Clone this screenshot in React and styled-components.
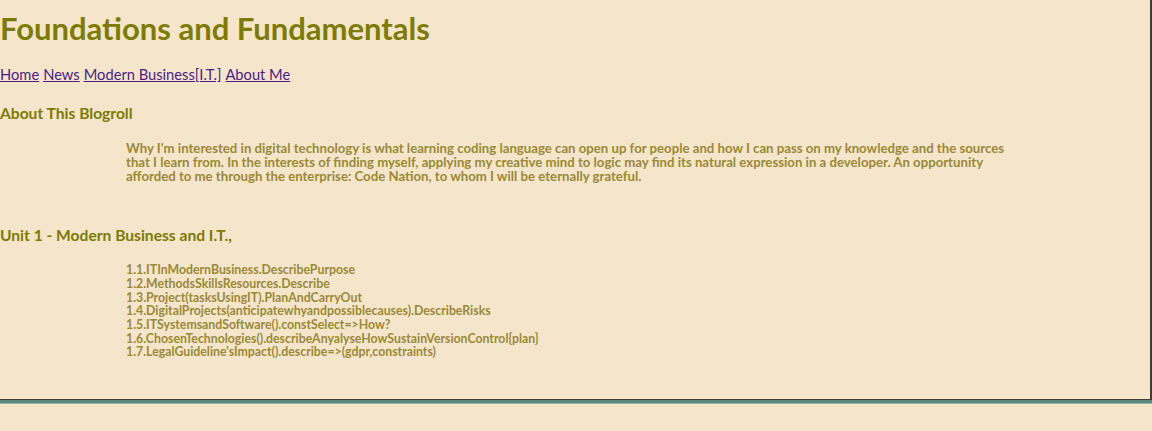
import React from "react";
import styled, { createGlobalStyle } from "styled-components";

const GlobalStyle = createGlobalStyle`
  html, body {
    margin: 0;
    padding: 0;
    background: #f5e5cb;
  }
  body {
    font-family: Lato, "Liberation Sans", sans-serif;
  }
`;

const Page = styled.div`
  display: flex;
  flex-direction: column;
  width: 1152px;
`;

const Main = styled.main`
  display: flex;
  flex-direction: column;
  box-sizing: border-box;
  width: 1152px;
  height: 400px;
  padding-top: 8px;
  border-right: 2px solid #3c3c3c;
  border-bottom: 1px solid #3c3c3c;
`;

const Shade = styled.div`
  height: 3px;
  background: #5e8a7e;
  border-bottom: 1px solid #93b3a6;
`;

const Title = styled.h1`
  margin: 0;
  font-size: 31px;
  line-height: 40px;
  font-weight: 700;
  color: #7d7b00;
`;

const Nav = styled.nav`
  display: flex;
  gap: 4px;
  margin-top: 16px;
  font-size: 14.7px;
  line-height: 20px;
`;

const NavLink = styled.a`
  color: #4b1d86;
  text-decoration: underline;
`;

const Heading = styled.h4`
  margin: ${(p) => p.$top}px 0 0;
  font-size: 15.6px;
  line-height: 20px;
  font-weight: 700;
  color: #7d7b00;
`;

const Text = styled.p`
  margin: ${(p) => p.$top}px 0 0 126px;
  width: 885px;
  font-size: ${(p) => p.$size}px;
  line-height: ${(p) => p.$lh}px;
  font-weight: 700;
  color: #9a8a36;
`;

const items = [
  "1.1.ITInModernBusiness.DescribePurpose",
  "1.2.MethodsSkillsResources.Describe",
  "1.3.Project(tasksUsingIT).PlanAndCarryOut",
  "1.4.DigitalProjects(anticipatewhyandpossiblecauses).DescribeRisks",
  "1.5.ITSystemsandSoftware().constSelect=>How?",
  "1.6.ChosenTechnologies().describeAnyalyseHowSustainVersionControl{plan}",
  "1.7.LegalGuideline'sImpact().describe=>(gdpr,constraints)",
];

export default function App() {
  return (
    <Page>
      <GlobalStyle />
      <Main>
        <Title>Foundations and Fundamentals</Title>
        <Nav>
          <NavLink href="#home">Home</NavLink>
          <NavLink href="#news">News</NavLink>
          <NavLink href="#business">Modern Business[I.T.]</NavLink>
          <NavLink href="#about">About Me</NavLink>
        </Nav>
        <Heading $top={19}>About This Blogroll</Heading>
        <Text $top={18} $size={13.2} $lh={14}>
          Why I'm interested in digital technology is what learning coding language can open up for people and how I can pass on my knowledge and the sources that I learn from. In the interests of finding myself, applying my creative mind to logic may find its natural expression in a developer. An opportunity afforded to me through the enterprise: Code Nation, to whom I will be eternally grateful.
        </Text>
        <Heading $top={42}>Unit 1 - Modern Business and I.T.,</Heading>
        <Text $top={18.4} $size={12.3} $lh={13.67}>
          {items.map((t, i) => (
            <React.Fragment key={i}>
              {t}
              <br />
            </React.Fragment>
          ))}
        </Text>
      </Main>
      <Shade />
    </Page>
  );
}
